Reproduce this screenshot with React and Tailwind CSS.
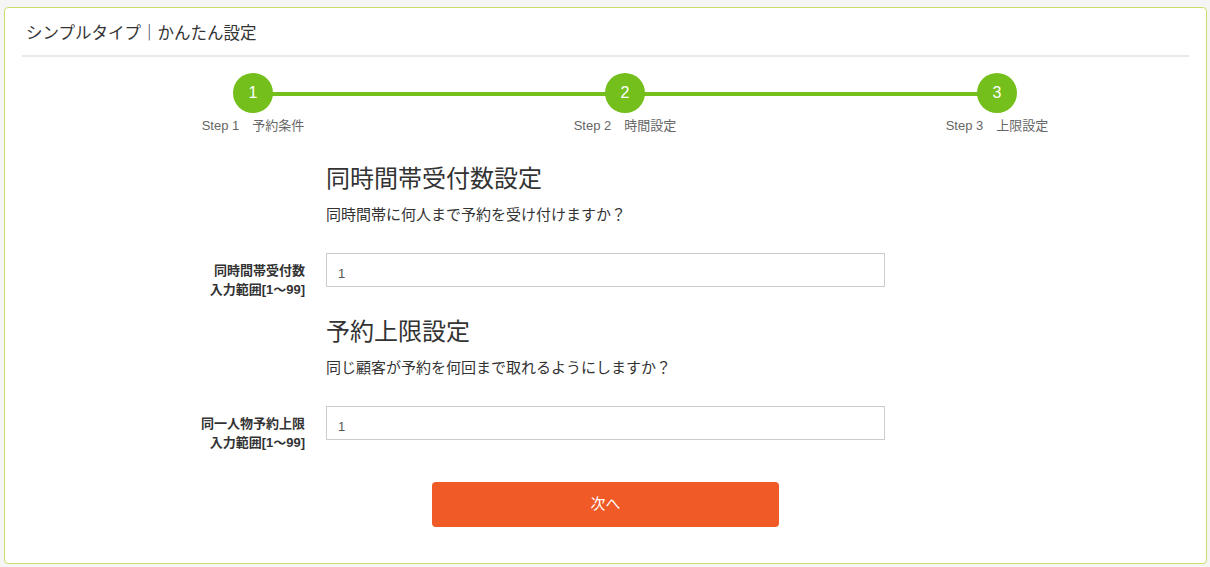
const steps = [
  { no: 1, label: "予約条件" },
  { no: 2, label: "時間設定" },
  { no: 3, label: "上限設定" },
];

const font = { fontFamily: '"Liberation Sans", "Noto Sans CJK JP", sans-serif' };

const Field = ({ label, value }) => (
  <div className="flex">
    <div className="w-[283px] pt-[8px] text-right text-[13px] font-bold leading-[19px] text-[#333]">
      <div>{label}</div>
      <div>入力範囲[1〜99]</div>
    </div>
    <div className="ml-[21px] w-[559px]">
      <input
        type="text"
        defaultValue={value}
        className="h-[34px] w-full border border-[#ccc] px-[11px] pt-[6px] text-[13px] text-[#555] outline-none"
        style={font}
      />
    </div>
  </div>
);

const Section = ({ title, question }) => (
  <div className="pl-[304px]">
    <h2 className="text-[24px] leading-[32px] text-[#333]">{title}</h2>
    <p className="mt-[9px] text-[15px] leading-[22px] text-[#333]">{question}</p>
  </div>
);

export default function App() {
  return (
    <div className="min-h-[567px] bg-[#f5f5f5] pl-[4px] pt-[7px]" style={font}>
      <div className="h-[557px] w-[1203px] rounded-[4px] border border-[#c8df6e] bg-white px-[17px]">
        {/* ヘッダー */}
        <div className="flex h-[49px] items-center border-b-2 border-[#e6e9ed] pl-[4px] pt-[3px] text-[16.5px] text-[#333]">
          シンプルタイプ｜かんたん設定
        </div>

        {/* ステップ */}
        <div className="relative ml-[45px] mt-[16px] flex w-[1116px]">
          <div className="absolute left-[186px] top-[19px] h-[4px] w-[744px] bg-[#74bf1b]" />
          {steps.map((s) => (
            <div key={s.no} className="relative flex w-[372px] flex-col items-center">
              <div className="flex h-10 w-10 items-center justify-center rounded-full bg-[#74bf1b] text-[16px] text-white">
                {s.no}
              </div>
              <div className="mt-[5px] text-[13px] leading-[16px] text-[#666]">
                Step {s.no}　{s.label}
              </div>
            </div>
          ))}
        </div>

        {/* フォーム */}
        <div className="mt-[29px]">
          <Section title="同時間帯受付数設定" question="同時間帯に何人まで予約を受け付けますか？" />
          <div className="mt-[27px]">
            <Field label="同時間帯受付数" value="1" />
          </div>
          <div className="mt-[17px]">
            <Section title="予約上限設定" question="同じ顧客が予約を何回まで取れるようにしますか？" />
          </div>
          <div className="mt-[27px]">
            <Field label="同一人物予約上限" value="1" />
          </div>
          <div className="mt-[30px] flex justify-center">
            <button className="h-[45px] w-[347px] rounded-[4px] bg-[#f05a26] text-[15px] text-white">
              次へ
            </button>
          </div>
        </div>
      </div>
    </div>
  );
}
